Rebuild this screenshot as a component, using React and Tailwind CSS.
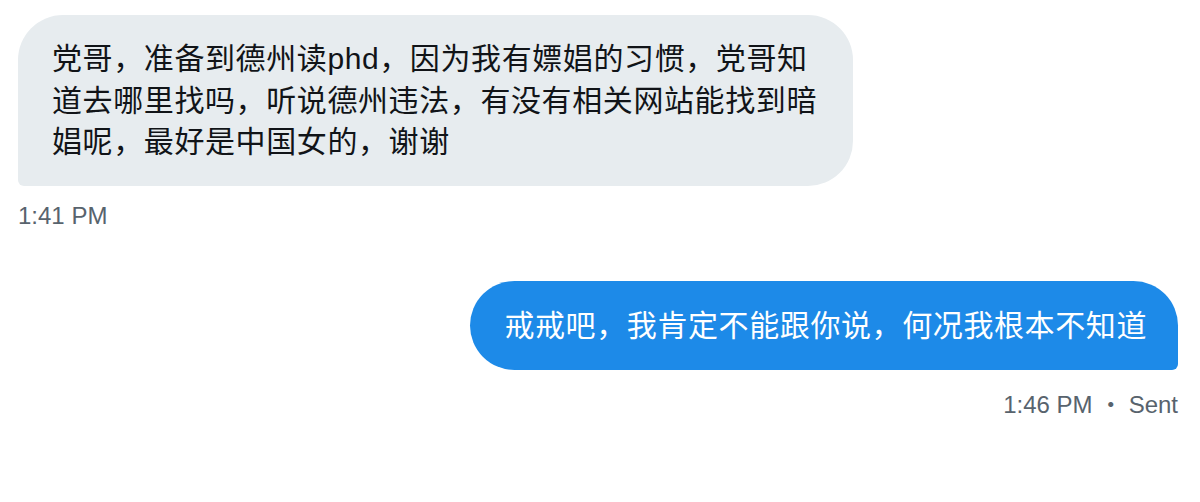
export default function App() {
  const cjk = { fontFamily: '"Liberation Sans", "Noto Sans CJK SC", sans-serif' };

  return (
    <div className="w-[1200px] h-[502px] bg-white pl-[18px] pr-[22px] pt-[15px]" style={cjk}>
      <div className="flex flex-col items-start">
        <div className="w-[835px] rounded-[45px] rounded-bl-[6px] bg-[#e7ecef] pl-[34px] pr-[30px] py-[23px] text-[30px] leading-[41.5px] tracking-[0.6px] text-[#111418]">
          党哥，准备到德州读phd，因为我有嫖娼的习惯，党哥知<br />
          道去哪里找吗，听说德州违法，有没有相关网站能找到暗<br />
          娼呢，最好是中国女的，谢谢
        </div>
        <div className="mt-[15px] text-[24px] leading-[30px] text-[#58636d]">1:41 PM</div>
      </div>

      <div className="mt-[50px] flex flex-col items-end">
        <div className="rounded-[45px] rounded-br-[6px] bg-[#1d8ae8] pl-[34px] pr-[31px] py-[24px] text-[30px] leading-[41.5px] tracking-[0.6px] text-white whitespace-nowrap">
          戒戒吧，我肯定不能跟你说，何况我根本不知道
        </div>
        <div className="mt-[20px] flex items-center text-[24px] leading-[30px] text-[#58636d]">
          <span>1:46 PM</span>
          <span className="mx-[6px]">・</span>
          <span>Sent</span>
        </div>
      </div>
    </div>
  );
}
